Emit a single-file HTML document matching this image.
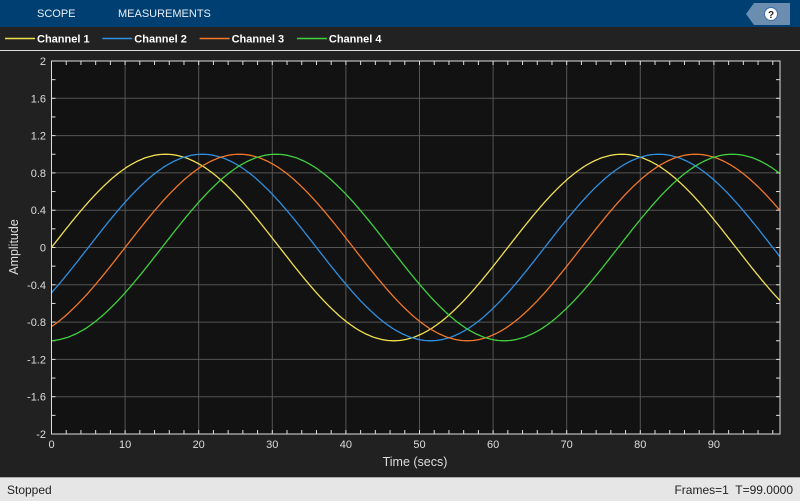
<!DOCTYPE html>
<html><head><style>
html,body{margin:0;padding:0;width:800px;height:500px;overflow:hidden;background:#212121;font-family:"Liberation Sans",sans-serif}
#tb{position:absolute;left:0;top:0;width:800px;height:27px;background:#003f72}
.tab{position:absolute;top:8px;color:#e8eef5;font-size:11px}
#sb{position:absolute;left:0;top:477px;width:800px;height:23px;background:#e6e6e6;border-top:1px solid #aaa;font-size:12px;color:#222}
</style></head><body>
<div id="tb">
<div class="tab" style="left:37px">SCOPE</div>
<div class="tab" style="left:118px">MEASUREMENTS</div>
<svg style="position:absolute;left:746px;top:3px" width="45" height="22"><polygon points="0,11 8,0 44,0 44,22 8,22" fill="#6a8db0"/><circle cx="25" cy="11" r="6.5" fill="#fff" stroke="#3a6fa8"/><text x="25" y="15" font-size="10" font-weight="bold" text-anchor="middle" fill="#222" font-family="Liberation Sans">?</text></svg>
</div>
<svg id="g" width="800" height="500" style="position:absolute;left:0;top:0" font-family="Liberation Sans"></svg>
<div id="sb"><span style="position:absolute;left:7px;top:5px">Stopped</span><span style="position:absolute;right:7px;top:5px">Frames=1&nbsp; T=99.0000</span></div>
<script>
var s='';
var X=function(t){return 51.5+t*7.36},Y=function(v){return 247.5-v*93.25};
s+='<rect x="0" y="27" width="800" height="23" fill="#222"/>';
s+='<line x1="0" y1="50.5" x2="800" y2="50.5" stroke="#ddd"/>';
var cols=['#f0e050','#2f8fe0','#f07828','#40d040'];
for(var i=0;i<4;i++){var x0=5+i*97.3;s+='<line x1="'+x0+'" y1="38.5" x2="'+(x0+30)+'" y2="38.5" stroke="'+cols[i]+'" stroke-width="1.5"/><text x="'+(x0+32)+'" y="42.5" fill="#fff" font-size="11" font-weight="bold">Channel '+(i+1)+'</text>';}
s+='<rect x="51.5" y="61" width="728.5" height="373" fill="#121212"/>';
for(var t=10;t<=90;t+=10)s+='<line x1="'+X(t)+'" y1="61" x2="'+X(t)+'" y2="434" stroke="#555"/>';
for(var k=-4;k<=4;k++){var v=k*0.4;s+='<line x1="51.5" y1="'+Y(v)+'" x2="780" y2="'+Y(v)+'" stroke="#555"/>';}
for(var t=0;t<=98;t+=2){s+='<line x1="'+X(t)+'" y1="434" x2="'+X(t)+'" y2="430" stroke="#ddd"/><line x1="'+X(t)+'" y1="61" x2="'+X(t)+'" y2="65" stroke="#ddd"/>';}
for(var k=-10;k<=10;k++){var v=k*0.2;s+='<line x1="51.5" y1="'+Y(v)+'" x2="55.5" y2="'+Y(v)+'" stroke="#ddd"/><line x1="780" y1="'+Y(v)+'" x2="776" y2="'+Y(v)+'" stroke="#ddd"/>';}
for(var i=0;i<4;i++){var p='';for(var t=0;t<=99;t+=0.25){p+=(t?'L':'M')+X(t).toFixed(1)+','+Y(Math.sin(2*Math.PI*(t-5*i)/62)).toFixed(1);}s+='<path d="'+p+'" fill="none" stroke="'+cols[i]+'" stroke-width="1.3"/>';}
s+='<rect x="51.5" y="61" width="728.5" height="373" fill="none" stroke="#ddd"/>';
for(var t=0;t<=90;t+=10)s+='<text x="'+X(t)+'" y="448" fill="#ddd" font-size="11" text-anchor="middle">'+t+'</text>';
var lab=['-2','-1.6','-1.2','-0.8','-0.4','0','0.4','0.8','1.2','1.6','2'];
for(var k=0;k<=10;k++)s+='<text x="46" y="'+(Y(-2+k*0.4)+4)+'" fill="#ddd" font-size="11" text-anchor="end">'+lab[k]+'</text>';
s+='<text x="415" y="466" fill="#ddd" font-size="12.5" text-anchor="middle">Time (secs)</text>';
s+='<text transform="translate(18,247) rotate(-90)" fill="#ddd" font-size="12.5" text-anchor="middle">Amplitude</text>';
document.getElementById('g').innerHTML=s;
</script>
</body></html>
